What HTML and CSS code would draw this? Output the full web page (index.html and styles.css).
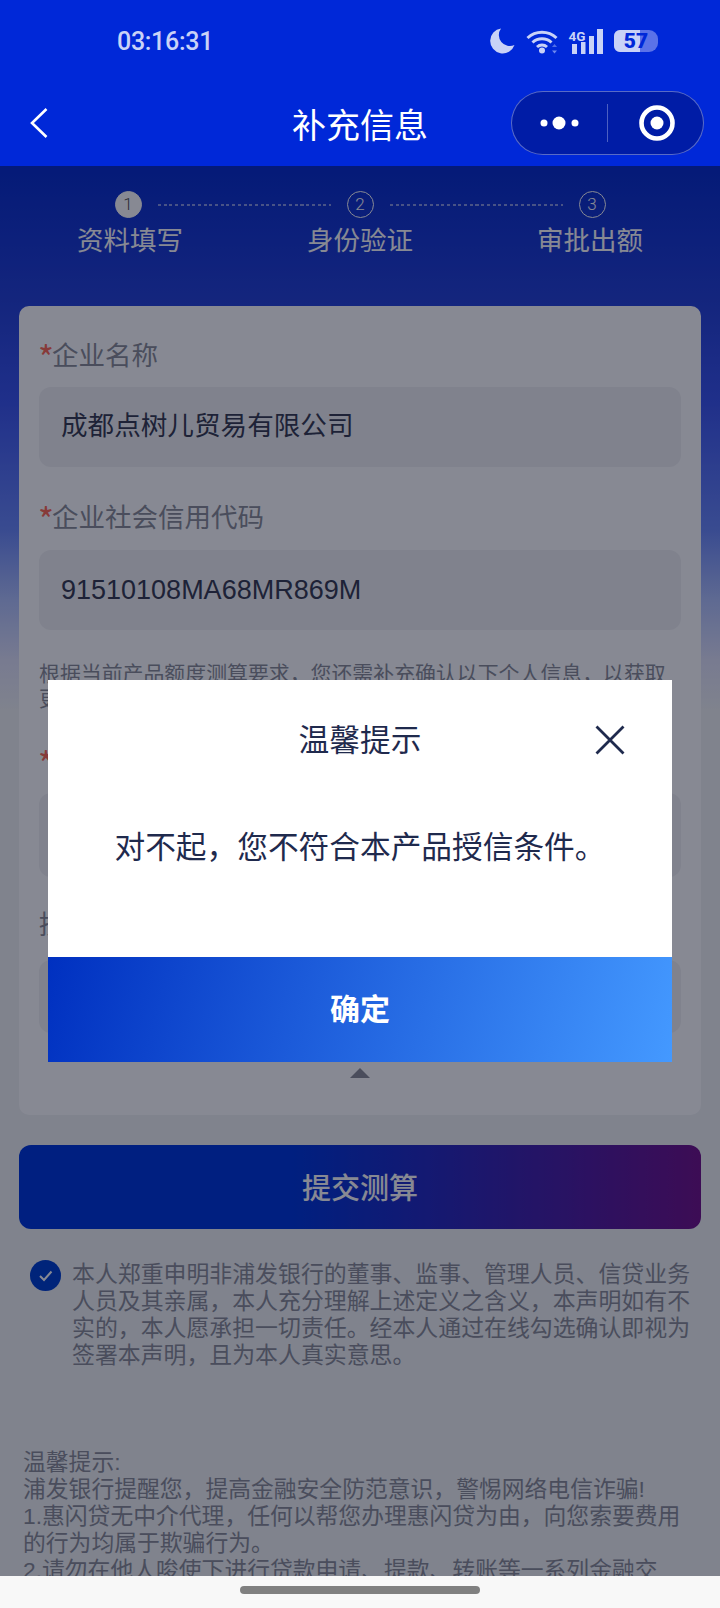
FILE: index.html
```html
<!DOCTYPE html>
<html lang="zh-CN">
<head>
  <meta charset="UTF-8">
  <title>补充信息</title>
  <meta name="viewport" content="width=device-width, initial-scale=1.0">
  <link rel="stylesheet" href="styles.css">
</head>
<body>

  <header class="top">
    <div class="status">
      <span class="time">03:16:31</span>
      <div class="status-icons">
        <svg class="moon" width="25" height="26" viewBox="0 0 25 26"><path d="M11 0.5 A12.5 12.5 0 1 0 24.5 17 A11 11 0 0 1 11 0.5 Z" fill="#c9d2f7"/></svg>
        <svg class="wifi" width="33" height="25" viewBox="0 0 33 25">
          <g fill="none" stroke="#c9d2f7" stroke-width="3">
            <path d="M1.5 9 A21 21 0 0 1 30.5 9"/>
            <path d="M6.5 13.5 A14 14 0 0 1 25.5 13.5"/>
            <path d="M11 18 A7.5 7.5 0 0 1 21 18"/>
          </g>
          <circle cx="16" cy="21.5" r="3" fill="#c9d2f7"/>
          <path d="M28.5 15 l2.5 3 h-5 z" fill="#4f6fe8"/>
          <path d="M28.5 24.5 l2.5 -3 h-5 z" fill="#6f89ee"/>
        </svg>
        <svg class="signal" width="36" height="25" viewBox="0 0 36 25">
          <text x="1.5" y="12" class="net">4G</text>
          <rect x="5" y="15" width="5" height="10" fill="#c9d2f7"/>
          <rect x="14" y="13" width="4.5" height="12" fill="#c9d2f7"/>
          <rect x="22" y="7" width="5" height="18" fill="#c9d2f7"/>
          <rect x="30" y="0" width="6" height="25" fill="#c9d2f7"/>
        </svg>
        <div class="battery">
          <span class="battery-fill"></span>
          <span class="battery-num">57</span>
        </div>
      </div>
    </div>
    <nav class="navbar">
      <svg class="back" width="18" height="30" viewBox="0 0 18 30"><path d="M16.5 1 L2 15 L16.5 29" fill="none" stroke="#fff" stroke-width="2.6"/></svg>
      <h1 class="title">补充信息</h1>
      <div class="capsule">
        <svg width="40" height="14" viewBox="0 0 40 14" class="more">
          <circle cx="4" cy="7" r="3.5" fill="#fff"/>
          <circle cx="19" cy="7" r="6.5" fill="#fff"/>
          <circle cx="35" cy="7" r="3.5" fill="#fff"/>
        </svg>
        <span class="capsule-line"></span>
        <svg width="36" height="36" viewBox="0 0 36 36" class="target">
          <circle cx="18" cy="18" r="15.5" fill="none" stroke="#fff" stroke-width="4.6"/>
          <circle cx="18" cy="18" r="6.5" fill="#fff"/>
        </svg>
      </div>
    </nav>
  </header>

  <main class="content">
    <div class="steps">
      <span class="dot dot-on">1</span>
      <span class="dash"></span>
      <span class="dot">2</span>
      <span class="dash"></span>
      <span class="dot">3</span>
    </div>
    <div class="step-names">
      <span>资料填写</span>
      <span>身份验证</span>
      <span>审批出额</span>
    </div>

    <section class="card">
      <div class="label label-first"><em>*</em>企业名称</div>
      <div class="field">成都点树儿贸易有限公司</div>
      <div class="label"><em>*</em>企业社会信用代码</div>
      <div class="field field-code">91510108MA68MR869M</div>
      <p class="note">根据当前产品额度测算要求，您还需补充确认以下个人信息，以获取更高额度</p>
      <div class="label label-third"><em>*</em>手机号码</div>
      <div class="field field-third"></div>
      <div class="label label-fourth">授信额度</div>
      <div class="field field-short"></div>
      <div class="arrow"></div>
    </section>

    <button class="submit">提交测算</button>

    <div class="agree">
      <svg class="check" width="31" height="31" viewBox="0 0 31 31">
        <circle cx="15.5" cy="15.5" r="15.5" fill="#0040d0"/>
        <path d="M10 16 L14 20 L21.5 11.5" fill="none" stroke="#fff" stroke-width="2"/>
      </svg>
      <p>本人郑重申明非浦发银行的董事、监事、管理人员、信贷业务人员及其亲属，本人充分理解上述定义之含义，本声明如有不实的，本人愿承担一切责任。经本人通过在线勾选确认即视为签署本声明，且为本人真实意思。</p>
    </div>

    <div class="tips">
      温馨提示:<br>
      浦发银行提醒您，提高金融安全防范意识，警惕网络电信诈骗!<br>
      1.惠闪贷无中介代理，任何以帮您办理惠闪贷为由，向您索要费用的行为均属于欺骗行为。<br>
      2.请勿在他人唆使下进行贷款申请、提款、转账等一系列金融交易。
    </div>

    <div class="mask">
      <div class="dialog">
        <div class="dialog-head">
          <h2>温馨提示</h2>
          <svg class="close" width="30" height="30" viewBox="0 0 30 30"><path d="M1.5 1.5 L28.5 28.5 M28.5 1.5 L1.5 28.5" stroke="#1f2a4d" stroke-width="2.8"/></svg>
        </div>
        <p class="dialog-text">对不起，您不符合本产品授信条件。</p>
        <div class="dialog-btn">确定</div>
      </div>
    </div>
  </main>

  <div class="home-bar"><span></span></div>

</body>
</html>
```

FILE: styles.css
```css
* {
  box-sizing: border-box;
}

html, body {
  margin: 0;
  height: 1608px;
  overflow: hidden;
}

body {
  display: flex;
  flex-direction: column;
  font-family: "Liberation Sans", "Noto Sans CJK SC", sans-serif;
  background: #f1f3f4;
}

/* top blue bar */
.top {
  background: #0028d8;
  height: 166px;
  flex: none;
}

.status {
  height: 82px;
  display: flex;
  align-items: center;
  justify-content: space-between;
  padding: 0 62px 0 117px;
}

.time {
  margin-top: 1px;
  font-family: Roboto, sans-serif;
  font-size: 25px;
  font-weight: 500;
  letter-spacing: -0.3px;
  color: #c9d2f7;
}

.status-icons {
  display: flex;
  align-items: center;
  gap: 11px;
}

.signal {
  margin-left: -3px;
}

.net {
  font-family: Roboto, sans-serif;
  font-size: 13.5px;
  font-weight: 700;
  fill: #c9d2f7;
}

.battery {
  position: relative;
  width: 44px;
  height: 22px;
  border-radius: 6px 9px 9px 6px;
  background: #5b72e8;
  overflow: hidden;
  font-family: Roboto, sans-serif;
  font-size: 21px;
  font-weight: 900;
  color: #0028d8;
  text-align: center;
  line-height: 22px;
}

.battery-fill {
  position: absolute;
  left: 0;
  top: 0;
  bottom: 0;
  width: 26px;
  background: #c9d2f7;
}

.battery-num {
  position: relative;
}

.navbar {
  height: 84px;
  display: grid;
  grid-template-columns: 1fr auto 1fr;
  align-items: center;
  padding: 0 16px 2px;
}

.back {
  margin-left: 14px;
}

.title {
  margin: 0;
  font-family: "Noto Sans CJK SC", sans-serif;
  font-size: 34px;
  font-weight: 400;
  color: #fff;
}

.capsule {
  justify-self: end;
  width: 193px;
  height: 64px;
  border-radius: 32px;
  background: #001ca6;
  border: 1px solid rgba(255, 255, 255, 0.35);
  display: flex;
  align-items: center;
  padding-left: 28px;
}

.capsule-line {
  width: 1px;
  height: 38px;
  margin-left: 27px;
  background: rgba(255, 255, 255, 0.3);
}

.target {
  margin-left: 31px;
}

/* page under the mask */
.content {
  position: relative;
  flex: 1;
  overflow: hidden;
  padding-top: 25px;
  background: linear-gradient(180deg, rgb(9, 46, 204) 0, rgb(38, 67, 214) 134px, rgb(60, 86, 238) 234px, rgb(109, 139, 250) 364px, rgb(179, 196, 253) 434px, rgb(226, 228, 250) 494px, #f1f3f4 544px);
}

.steps {
  display: flex;
  align-items: center;
  justify-content: center;
  gap: 16px;
}

.dot {
  width: 27px;
  height: 27px;
  border-radius: 50%;
  border: 1px solid #fff;
  font-family: Roboto, sans-serif;
  font-weight: 300;
  color: #fff;
  font-size: 17px;
  line-height: 25px;
  text-align: center;
}

.dot-on {
  background: #fff;
  color: #555;
}

.dash {
  width: 173px;
  height: 2px;
  background: repeating-linear-gradient(90deg, rgba(255, 255, 255, 0.5) 0, rgba(255, 255, 255, 0.5) 3px, transparent 3px, transparent 5.7px);
}

.step-names {
  display: flex;
  justify-content: center;
  gap: 124px;
  margin-top: 3px;
  font-family: "Noto Sans CJK SC", sans-serif;
  font-size: 26.5px;
  line-height: 36px;
  color: #fff;
}

.card {
  position: relative;
  margin: 49px 19px 0;
  height: 809px;
  padding: 30px 20px 0;
  background: #fff;
  border-radius: 10px;
}

.label {
  margin-top: 31px;
  font-family: "Noto Sans CJK SC", sans-serif;
  font-size: 26.5px;
  line-height: 36px;
  color: #8c8f98;
}

.label em {
  display: inline-block;
  width: 13px;
  margin-left: -1px;
  margin-right: 1px;
  font-size: 34px;
  line-height: 0;
  vertical-align: -6px;
  font-style: normal;
  color: #ff6a55;
}

.label-first {
  margin-top: 0;
}

.label-third {
  margin-top: 32px;
}

.label-fourth {
  margin-top: 28px;
}

.field {
  height: 80px;
  margin-top: 15px;
  padding-left: 22px;
  border-radius: 12px;
  background: #f1f2f3;
  font-size: 26.6px;
  line-height: 78px;
  color: #3a3e52;
}

.field-code {
  margin-top: 16px;
  font-size: 27px;
  line-height: 80px;
}

.field-third {
  margin-top: 15px;
  height: 84px;
}

.field-short {
  margin-top: 19px;
  height: 73px;
}

.note {
  margin: 30px 0 0;
  font-family: "Noto Sans CJK SC", sans-serif;
  font-size: 20.9px;
  line-height: 25px;
  color: #8c8f98;
}

.arrow {
  position: absolute;
  left: 331px;
  top: 762px;
  width: 0;
  height: 0;
  border-left: 10px solid transparent;
  border-right: 10px solid transparent;
  border-bottom: 10px solid #8c8f98;
}

.submit {
  display: block;
  width: 682px;
  height: 84px;
  margin: 30px 19px 0;
  padding-bottom: 3px;
  border: 0;
  border-radius: 12px;
  background: linear-gradient(90deg, rgb(0, 56, 219) 0, rgb(0, 56, 219) 40%, rgb(115, 20, 138) 100%);
  font-family: "Noto Sans CJK SC", sans-serif;
  font-size: 29px;
  font-weight: 500;
  color: #fff;
}

.agree {
  display: flex;
  gap: 11px;
  margin: 30px 20px 0 30px;
}

.check {
  flex: none;
  margin-top: 1px;
}

.agree p {
  margin: 0;
  font-family: "Noto Sans CJK SC", sans-serif;
  font-size: 22.9px;
  line-height: 27px;
  color: #8c8f98;
}

.tips {
  margin: 82px 24px 0 23px;
  font-family: "Liberation Sans", "Noto Sans CJK SC", sans-serif;
  font-size: 22.8px;
  line-height: 27px;
  color: #8c8f98;
}

/* dialog */
.mask {
  position: absolute;
  inset: 0;
  display: flex;
  align-items: center;
  justify-content: center;
  background: rgba(0, 5, 25, 0.47);
}

.dialog {
  width: 624px;
  height: 382px;
  margin-bottom: 1px;
  background: #fff;
  display: flex;
  flex-direction: column;
  font-family: "Noto Sans CJK SC", sans-serif;
}

.dialog-head {
  position: relative;
  height: 116px;
  display: flex;
  align-items: center;
  justify-content: center;
}

.dialog-head h2 {
  margin: 0;
  font-size: 30.7px;
  font-weight: 400;
  color: #1f2a4d;
}

.close {
  position: absolute;
  right: 47px;
  top: 45px;
}

.dialog-text {
  flex: 1;
  margin: 0;
  padding-top: 27px;
  font-size: 30.7px;
  line-height: 44px;
  text-align: center;
  color: #1f2a4d;
}

.dialog-btn {
  height: 105px;
  background: linear-gradient(105deg, #0030c0 0, #4499ff 100%);
  color: #fff;
  font-size: 30px;
  font-weight: 700;
  line-height: 100px;
  text-align: center;
}

/* gesture bar */
.home-bar {
  flex: none;
  height: 32px;
  background: #f8f8f8;
  display: flex;
  justify-content: center;
  padding-top: 10px;
}

.home-bar span {
  width: 240px;
  height: 8px;
  border-radius: 4px;
  background: #808080;
}
```
